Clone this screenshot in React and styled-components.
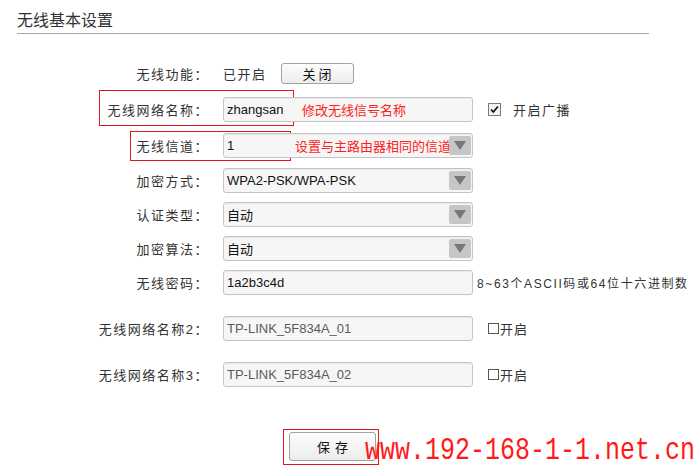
import React from 'react'
import styled, { createGlobalStyle } from 'styled-components'

const GlobalStyle = createGlobalStyle`
	body {
		margin: 0;
		background: #fff;
		font-family: 'Liberation Sans', 'Noto Sans CJK SC', sans-serif;
	}
`

const Page = styled.div`
	position: relative;
	width: 698px;
	height: 470px;
	overflow: hidden;
	background: #fff;
`

const Title = styled.h2`
	margin: 0 0 0 17px;
	width: 632px;
	padding-top: 8px;
	height: 25px;
	border-bottom: 1px solid #a6a6a6;
	font-family: 'Noto Sans CJK SC', sans-serif;
	font-size: 16px;
	font-weight: normal;
	line-height: 22px;
	color: #333;
`

const Form = styled.div`
	display: flex;
	flex-direction: column;
	padding-top: 29px;
`

const Row = styled.div`
	position: relative;
	display: grid;
	grid-template-columns: 209px 250px auto;
	column-gap: 14px;
	align-items: center;
	height: ${props => props.h || 25}px;
	margin-bottom: ${props => props.gap || 10}px;
`

const Label = styled.span`
	text-align: right;
	font-family: 'Liberation Sans', 'Noto Sans CJK SC', sans-serif;
	font-size: 13px;
	letter-spacing: 1.5px;
	color: #333;
	white-space: nowrap;
`

const Field = styled.div`
	position: relative;
	box-sizing: border-box;
	height: 25px;
	border: 1px solid #c4c4c4;
	border-radius: 3px;
	background: #f6f6f6;
	box-shadow: inset 0 1px 1px rgba(0, 0, 0, 0.06);
	padding-left: 3px;
	display: flex;
	align-items: center;
	font-size: 13px;
	color: ${props => (props.disabled ? '#5a5a5a' : '#111')};
	white-space: nowrap;
`

const Arrow = styled.span`
	position: absolute;
	right: 1px;
	top: 2px;
	bottom: 2px;
	width: 22px;
	border-radius: 2px;
	background: #c6c6c6;
	display: flex;
	align-items: center;
	justify-content: center;
	&::after {
		content: '';
		border-left: 6px solid transparent;
		border-right: 6px solid transparent;
		border-top: 9px solid #777;
	}
`

const Hint = styled.span`
	position: absolute;
	left: ${props => props.left}px;
	font-family: 'Noto Sans CJK SC', sans-serif;
	font-size: 13px;
	letter-spacing: ${props => props.spacing || 0}px;
	color: #f22;
`

const Extra = styled.div`
	display: flex;
	align-items: center;
	font-family: 'Liberation Sans', 'Noto Sans CJK SC', sans-serif;
	font-size: ${props => props.size || 13}px;
	letter-spacing: ${props => props.spacing || 1}px;
	margin-left: ${props => props.shift || 0}px;
	color: #333;
	white-space: nowrap;
`

const StateText = styled.span`
	display: flex;
	align-items: center;
	gap: 14px;
	font-family: 'Noto Sans CJK SC', sans-serif;
	font-size: 13px;
	letter-spacing: 1.5px;
	color: #333;
`

const Button = styled.button`
	box-sizing: border-box;
	width: ${props => props.w}px;
	height: ${props => props.h}px;
	border: 1px solid #a3a3a3;
	border-radius: 3px;
	background: linear-gradient(#fdfdfd, #ececec);
	font-family: 'Noto Sans CJK SC', sans-serif;
	font-size: 13px;
	letter-spacing: ${props => props.spacing}px;
	color: #111;
	padding: 0;
	padding-left: ${props => props.spacing}px;
	cursor: pointer;
`

const EmptyBox = styled.span`
	display: inline-block;
	box-sizing: border-box;
	width: 11px;
	height: 11px;
	border: 1px solid #555;
	margin-right: 1px;
`

const CheckWrap = styled.span`
	display: inline-flex;
	margin-right: 12px;
`

const Mark = styled.div`
	position: absolute;
	left: ${props => props.x}px;
	top: ${props => props.y}px;
	width: ${props => props.w}px;
	height: ${props => props.h}px;
	border: 1px solid #e3151d;
	box-sizing: border-box;
	pointer-events: none;
`

const SaveRow = styled.div`
	position: relative;
	padding-left: 289px;
	margin-top: 35px;
`

const Watermark = styled.div`
	position: absolute;
	left: 365px;
	top: 441px;
	font-family: 'Liberation Mono', monospace;
	font-size: 25px;
	line-height: 25px;
	color: #ff1a1a;
	transform: scaleY(1.22);
	transform-origin: bottom left;
	white-space: nowrap;
`

const CheckedBox = () => (
	<CheckWrap>
		<svg width="13" height="13" viewBox="0 0 13 13">
			<rect x="0.5" y="0.5" width="12" height="12" fill="#f4f4f4" stroke="#7a7a7a" />
			<path d="M3 6.5 L5.3 9 L10 3.5" fill="none" stroke="#111" strokeWidth="1.8" />
		</svg>
	</CheckWrap>
)

const selects = [
	{ label: '加密方式：', value: 'WPA2-PSK/WPA-PSK' },
	{ label: '认证类型：', value: '自动' },
	{ label: '加密算法：', value: '自动' },
]

const App = () => (
	<Page>
		<GlobalStyle />
		<Title>无线基本设置</Title>
		<Form>
			<Row h={21} gap={13}>
				<Label>无线功能：</Label>
				<StateText>
					已开启
					<Button w={73} h={21} spacing={3}>
						关闭
					</Button>
				</StateText>
			</Row>
			<Row gap={11}>
				<Mark x={99} y={-7} w={195} h={36} />
				<Label>无线网络名称：</Label>
				<Field>
					zhangsan
					<Hint left={78}>修改无线信号名称</Hint>
				</Field>
				<Extra shift={1} spacing={1.5}>
					<CheckedBox />
					开启广播
				</Extra>
			</Row>
			<Row>
				<Mark x={130} y={-2} w={161} h={30} />
				<Label>无线信道：</Label>
				<Field>
					1
					<Hint left={71}>设置与主路由器相同的信道</Hint>
					<Arrow />
				</Field>
			</Row>
			{selects.map((item, index) => (
				<Row key={index} gap={9}>
					<Label>{item.label}</Label>
					<Field>
						{item.value}
						<Arrow />
					</Field>
				</Row>
			))}
			<Row gap={21}>
				<Label>无线密码：</Label>
				<Field>1a2b3c4d</Field>
				<Extra size={12} spacing={1.6} shift={-10}>
					8~63个ASCII码或64位十六进制数
				</Extra>
			</Row>
			<Row gap={21}>
				<Label>无线网络名称2：</Label>
				<Field disabled>TP-LINK_5F834A_01</Field>
				<Extra shift={1}>
					<EmptyBox />
					开启
				</Extra>
			</Row>
			<Row gap={0}>
				<Label>无线网络名称3：</Label>
				<Field disabled>TP-LINK_5F834A_02</Field>
				<Extra shift={1}>
					<EmptyBox />
					开启
				</Extra>
			</Row>
			<SaveRow>
				<Mark x={283} y={-3} w={96} h={36} />
				<Button w={87} h={29} spacing={5}>
					保存
				</Button>
			</SaveRow>
		</Form>
		<Watermark>www.192-168-1-1.net.cn</Watermark>
	</Page>
)

export default App
